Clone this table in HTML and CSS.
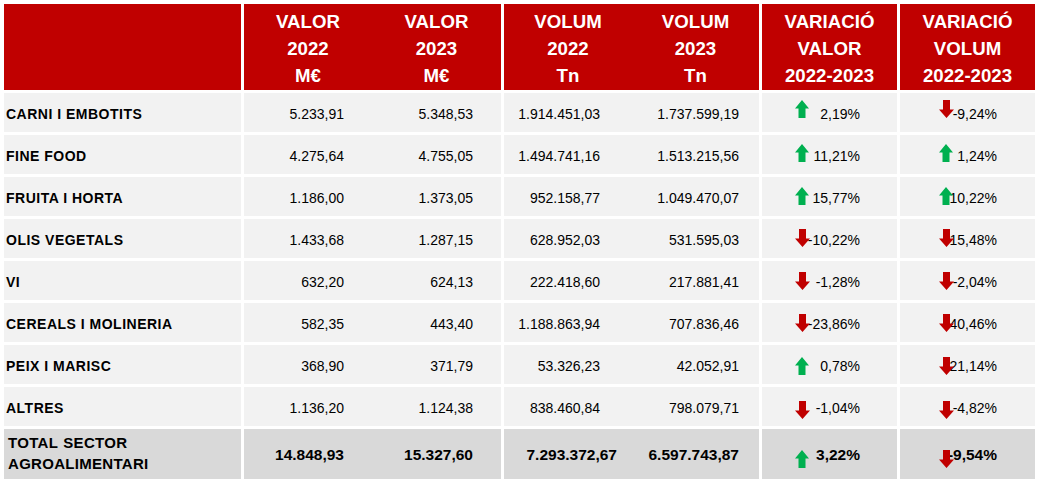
FILE: index.html
```html
<!DOCTYPE html>
<html lang="ca">
<head>
<meta charset="utf-8">
<title>Sector agroalimentari</title>
<link rel="stylesheet" href="styles.css">
</head>
<body>
<table class="data">
  <colgroup>
    <col class="c-label"><col class="c-v22"><col class="c-v23"><col class="c-vol22"><col class="c-vol23"><col class="c-varv"><col class="c-varvol">
  </colgroup>
  <thead>
    <tr class="head">
      <th class="g-end"></th>
      <th>VALOR<br>2022<br>M€</th>
      <th class="g-end">VALOR<br>2023<br>M€</th>
      <th>VOLUM<br>2022<br>Tn</th>
      <th class="g-end">VOLUM<br>2023<br>Tn</th>
      <th class="g-end">VARIACIÓ<br>VALOR<br>2022-2023</th>
      <th>VARIACIÓ<br>VOLUM<br>2022-2023</th>
    </tr>
  </thead>
  <tbody>
    <tr class="row r1">
      <td class="label g-end">CARNI I EMBOTITS</td>
      <td class="num v22">5.233,91</td>
      <td class="num v23 g-end">5.348,53</td>
      <td class="num vol22">1.914.451,03</td>
      <td class="num vol23 g-end">1.737.599,19</td>
      <td class="var varv g-end"><span class="arrow"><svg class="up" viewBox="0 0 14 18" width="14" height="18"><polygon points="7,0 14,8.5 10.5,8.5 10.5,18 3.5,18 3.5,8.5 0,8.5"/></svg></span>2,19%</td>
      <td class="var varvol"><span class="arrow"><svg class="down" viewBox="0 0 15 18" width="15" height="18"><polygon points="4,0 11,0 11,9.5 15,9.5 7.5,18 0,9.5 4,9.5"/></svg></span>-9,24%</td>
    </tr>
    <tr class="row r2">
      <td class="label g-end">FINE FOOD</td>
      <td class="num v22">4.275,64</td>
      <td class="num v23 g-end">4.755,05</td>
      <td class="num vol22">1.494.741,16</td>
      <td class="num vol23 g-end">1.513.215,56</td>
      <td class="var varv g-end"><span class="arrow"><svg class="up" viewBox="0 0 14 18" width="14" height="18"><polygon points="7,0 14,8.5 10.5,8.5 10.5,18 3.5,18 3.5,8.5 0,8.5"/></svg></span>11,21%</td>
      <td class="var varvol"><span class="arrow"><svg class="up" viewBox="0 0 14 18" width="14" height="18"><polygon points="7,0 14,8.5 10.5,8.5 10.5,18 3.5,18 3.5,8.5 0,8.5"/></svg></span>1,24%</td>
    </tr>
    <tr class="row r3">
      <td class="label g-end">FRUITA I HORTA</td>
      <td class="num v22">1.186,00</td>
      <td class="num v23 g-end">1.373,05</td>
      <td class="num vol22">952.158,77</td>
      <td class="num vol23 g-end">1.049.470,07</td>
      <td class="var varv g-end"><span class="arrow"><svg class="up" viewBox="0 0 14 18" width="14" height="18"><polygon points="7,0 14,8.5 10.5,8.5 10.5,18 3.5,18 3.5,8.5 0,8.5"/></svg></span>15,77%</td>
      <td class="var varvol"><span class="arrow"><svg class="up" viewBox="0 0 14 18" width="14" height="18"><polygon points="7,0 14,8.5 10.5,8.5 10.5,18 3.5,18 3.5,8.5 0,8.5"/></svg></span>10,22%</td>
    </tr>
    <tr class="row r4">
      <td class="label g-end">OLIS VEGETALS</td>
      <td class="num v22">1.433,68</td>
      <td class="num v23 g-end">1.287,15</td>
      <td class="num vol22">628.952,03</td>
      <td class="num vol23 g-end">531.595,03</td>
      <td class="var varv g-end"><span class="arrow"><svg class="down" viewBox="0 0 15 18" width="15" height="18"><polygon points="4,0 11,0 11,9.5 15,9.5 7.5,18 0,9.5 4,9.5"/></svg></span>-10,22%</td>
      <td class="var varvol"><span class="arrow"><svg class="down" viewBox="0 0 15 18" width="15" height="18"><polygon points="4,0 11,0 11,9.5 15,9.5 7.5,18 0,9.5 4,9.5"/></svg></span>-15,48%</td>
    </tr>
    <tr class="row r5">
      <td class="label g-end">VI</td>
      <td class="num v22">632,20</td>
      <td class="num v23 g-end">624,13</td>
      <td class="num vol22">222.418,60</td>
      <td class="num vol23 g-end">217.881,41</td>
      <td class="var varv g-end"><span class="arrow"><svg class="down" viewBox="0 0 15 18" width="15" height="18"><polygon points="4,0 11,0 11,9.5 15,9.5 7.5,18 0,9.5 4,9.5"/></svg></span>-1,28%</td>
      <td class="var varvol"><span class="arrow"><svg class="down" viewBox="0 0 15 18" width="15" height="18"><polygon points="4,0 11,0 11,9.5 15,9.5 7.5,18 0,9.5 4,9.5"/></svg></span>-2,04%</td>
    </tr>
    <tr class="row r6">
      <td class="label g-end">CEREALS I MOLINERIA</td>
      <td class="num v22">582,35</td>
      <td class="num v23 g-end">443,40</td>
      <td class="num vol22">1.188.863,94</td>
      <td class="num vol23 g-end">707.836,46</td>
      <td class="var varv g-end"><span class="arrow"><svg class="down" viewBox="0 0 15 18" width="15" height="18"><polygon points="4,0 11,0 11,9.5 15,9.5 7.5,18 0,9.5 4,9.5"/></svg></span>-23,86%</td>
      <td class="var varvol"><span class="arrow"><svg class="down" viewBox="0 0 15 18" width="15" height="18"><polygon points="4,0 11,0 11,9.5 15,9.5 7.5,18 0,9.5 4,9.5"/></svg></span>-40,46%</td>
    </tr>
    <tr class="row r7">
      <td class="label g-end">PEIX I MARISC</td>
      <td class="num v22">368,90</td>
      <td class="num v23 g-end">371,79</td>
      <td class="num vol22">53.326,23</td>
      <td class="num vol23 g-end">42.052,91</td>
      <td class="var varv g-end"><span class="arrow"><svg class="up" viewBox="0 0 14 18" width="14" height="18"><polygon points="7,0 14,8.5 10.5,8.5 10.5,18 3.5,18 3.5,8.5 0,8.5"/></svg></span>0,78%</td>
      <td class="var varvol"><span class="arrow"><svg class="down" viewBox="0 0 15 18" width="15" height="18"><polygon points="4,0 11,0 11,9.5 15,9.5 7.5,18 0,9.5 4,9.5"/></svg></span>-21,14%</td>
    </tr>
    <tr class="row r8">
      <td class="label g-end">ALTRES</td>
      <td class="num v22">1.136,20</td>
      <td class="num v23 g-end">1.124,38</td>
      <td class="num vol22">838.460,84</td>
      <td class="num vol23 g-end">798.079,71</td>
      <td class="var varv g-end"><span class="arrow"><svg class="down" viewBox="0 0 15 18" width="15" height="18"><polygon points="4,0 11,0 11,9.5 15,9.5 7.5,18 0,9.5 4,9.5"/></svg></span>-1,04%</td>
      <td class="var varvol"><span class="arrow"><svg class="down" viewBox="0 0 15 18" width="15" height="18"><polygon points="4,0 11,0 11,9.5 15,9.5 7.5,18 0,9.5 4,9.5"/></svg></span>-4,82%</td>
    </tr>
    <tr class="total">
      <td class="label g-end">TOTAL SECTOR<br>AGROALIMENTARI</td>
      <td class="num v22">14.848,93</td>
      <td class="num v23 g-end">15.327,60</td>
      <td class="num vol22">7.293.372,67</td>
      <td class="num vol23 g-end">6.597.743,87</td>
      <td class="var varv g-end"><span class="arrow"><svg class="up" viewBox="0 0 14 18" width="14" height="18"><polygon points="7,0 14,8.5 10.5,8.5 10.5,18 3.5,18 3.5,8.5 0,8.5"/></svg></span>3,22%</td>
      <td class="var varvol"><span class="arrow"><svg class="down" viewBox="0 0 15 18" width="15" height="18"><polygon points="4,0 11,0 11,9.5 15,9.5 7.5,18 0,9.5 4,9.5"/></svg></span>-9,54%</td>
    </tr>
  </tbody>
</table>
</body>
</html>
```

FILE: styles.css
```css
html, body {
  margin: 0;
  padding: 0;
  background: #ffffff;
}

body {
  font-family: "Liberation Sans", Arial, sans-serif;
  color: #000;
}

.data {
  margin: 4px;
  width: 1031px;
  table-layout: fixed;
  border-collapse: separate;
  border-spacing: 0;
}

.c-label  { width: 240px; }
.c-v22    { width: 128px; }
.c-v23    { width: 132px; }
.c-vol22  { width: 128px; }
.c-vol23  { width: 130px; }
.c-varv   { width: 138px; }
.c-varvol { width: 135px; }

.data th,
.data td {
  padding: 0;
  border-bottom: 3px solid #ffffff;
  vertical-align: middle;
  white-space: nowrap;
}

.data .g-end {
  border-right: 3px solid #ffffff;
}

/* header */
.head {
  height: 89px;
}

.head th {
  background: #c00000;
  color: #ffffff;
  font-weight: bold;
  font-size: 18.67px;
  line-height: 27px;
  text-align: center;
  padding-top: 3px;
}

/* body rows */
.row {
  height: 42px;
}

.row td {
  background: #f2f2f2;
  font-size: 14px;
  line-height: 16px;
  padding-top: 3px;
}

.label {
  text-align: left;
  font-weight: bold;
  letter-spacing: 0.5px;
}

.row .label {
  padding-left: 2px;
}

.num {
  text-align: right;
}

.data .v22   { padding-right: 28px; }
.data .v23   { padding-right: 28px; }
.data .vol22 { padding-right: 32px; }
.data .vol23 { padding-right: 20px; }

.var {
  position: relative;
  text-align: right;
}

.data .varv   { padding-right: 37px; }
.data .varvol { padding-right: 38px; }

.arrow {
  position: absolute;
  top: 10px;
  width: 15px;
  height: 18px;
  line-height: 0;
}

.varv .arrow   { left: 33px; }
.varvol .arrow { left: 39px; }

.arrow svg {
  display: block;
}

.arrow .up   { fill: #00b050; }
.arrow .down { fill: #c00000; }

/* arrow placement per row, as in the source sheet */
.r1 .arrow { top: 7px; }
.r2 .arrow { top: 8.5px; }
.r3 .arrow { top: 9.5px; }
.r4 .arrow { top: 10px; }
.r5 .arrow { top: 10.5px; }
.r6 .arrow { top: 11px; }
.r7 .arrow { top: 11.5px; }
.r8 .arrow { top: 13.5px; }

/* total row */
.total {
  height: 50px;
}

.total td {
  background: #d9d9d9;
  border-bottom: 0;
  font-weight: bold;
  font-size: 15.5px;
  line-height: 21px;
  padding-top: 0;
}

.data .total .label {
  font-size: 15px;
  letter-spacing: 0.3px;
  word-spacing: 1px;
  padding-left: 4px;
  padding-bottom: 3px;
}

.data .total .vol22 {
  padding-right: 15px;
}

.total .arrow {
  top: 21px;
}
```
